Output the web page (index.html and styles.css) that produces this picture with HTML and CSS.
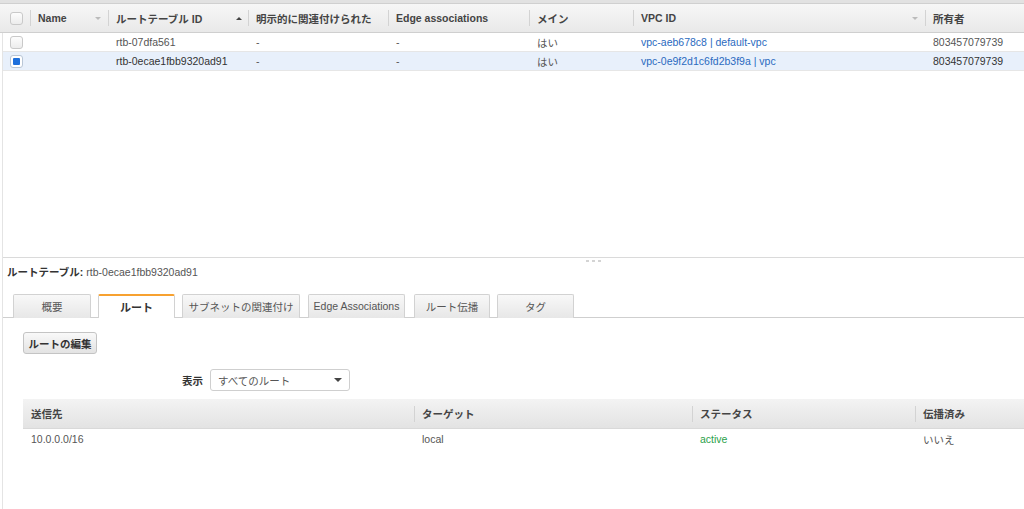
FILE: index.html
```html
<!DOCTYPE html>
<html lang="ja">
<head>
<meta charset="utf-8">
<title>ルートテーブル</title>
<link rel="stylesheet" href="styles.css">
</head>
<body>
<div class="topbar"></div>
<div class="grid head">
  <div class="cell chk"><span class="cb"></span></div>
  <div class="cell sep">Name<span class="arrow down light"></span></div>
  <div class="cell sep">ルートテーブル ID<span class="arrow up"></span></div>
  <div class="cell sep">明示的に関連付けられた</div>
  <div class="cell sep">Edge associations</div>
  <div class="cell sep">メイン</div>
  <div class="cell sep">VPC ID<span class="arrow down light"></span></div>
  <div class="cell sep">所有者</div>
</div>
<div class="main">
  <div class="list">
    <div class="grid row">
      <div class="cell chk"><span class="cb"></span></div>
      <div class="cell"></div>
      <div class="cell">rtb-07dfa561</div>
      <div class="cell">-</div>
      <div class="cell">-</div>
      <div class="cell">はい</div>
      <div class="cell link">vpc-aeb678c8 | default-vpc</div>
      <div class="cell">803457079739</div>
    </div>
    <div class="grid row selected">
      <div class="cell chk"><span class="cb on"></span></div>
      <div class="cell"></div>
      <div class="cell dark">rtb-0ecae1fbb9320ad91</div>
      <div class="cell">-</div>
      <div class="cell">-</div>
      <div class="cell">はい</div>
      <div class="cell link">vpc-0e9f2d1c6fd2b3f9a | vpc</div>
      <div class="cell dark">803457079739</div>
    </div>
  </div>
  <div class="details">
    <div class="gripline"><span class="grip"><i></i><i></i><i></i></span></div>
    <div class="title"><b>ルートテーブル:</b> rtb-0ecae1fbb9320ad91</div>
    <div class="tabs">
      <div class="tab w78">概要</div>
      <div class="tab w77 active">ルート</div>
      <div class="tab w118">サブネットの関連付け</div>
      <div class="tab w97">Edge Associations</div>
      <div class="tab w76">ルート伝播</div>
      <div class="tab w77">タグ</div>
    </div>
    <div class="pane">
      <div class="btnrow"><span class="btn">ルートの編集</span></div>
      <div class="filter">
        <b>表示</b>
        <div class="select"><span>すべてのルート</span><span class="caret"></span></div>
      </div>
      <div class="rtable">
        <div class="rgrid rhead">
          <div class="rc">送信先</div>
          <div class="rc sep">ターゲット</div>
          <div class="rc sep">ステータス</div>
          <div class="rc sep">伝播済み</div>
        </div>
        <div class="rgrid rrow">
          <div class="rc">10.0.0.0/16</div>
          <div class="rc">local</div>
          <div class="rc green">active</div>
          <div class="rc">いいえ</div>
        </div>
      </div>
    </div>
  </div>
</div>
</body>
</html>
```
FILE: styles.css
```css
html, body {
  margin: 0;
  padding: 0;
  background: #fff;
}
body {
  width: 1024px;
  height: 509px;
  overflow: hidden;
  font-family: "Liberation Sans", Arial, "Noto Sans CJK JP", sans-serif;
  font-size: 10.5px;
  color: #555;
}
.topbar {
  height: 3px;
  background: #e2e2e2;
  border-bottom: 1px solid #d0d0d0;
}
.grid {
  display: grid;
  grid-template-columns: 30px 78px 140px 140px 141px 104px 292px 99px;
}
.head {
  height: 28px;
  background: linear-gradient(#f7f7f7, #e9e9e9);
  border-bottom: 1px solid #cfcfcf;
  font-weight: bold;
  color: #444;
}
.cell {
  display: flex;
  align-items: center;
  padding-left: 8px;
  white-space: nowrap;
  overflow: hidden;
}
.sep {
  background-image: linear-gradient(#d3d3d3, #d3d3d3);
  background-repeat: no-repeat;
  background-position: left center;
  background-size: 1px 16px;
}
.head .cell.chk {
  padding-left: 10px;
}
.arrow {
  margin-left: auto;
  margin-right: 7px;
  width: 0;
  height: 0;
  border-left: 3px solid transparent;
  border-right: 3px solid transparent;
}
.arrow.down {
  border-top: 3px solid #bbb;
}
.arrow.up {
  border-bottom: 3px solid #444;
  margin-right: 6px;
}
.cb {
  display: block;
  box-sizing: border-box;
  width: 13px;
  height: 13px;
  border: 1px solid #c9c9c9;
  border-radius: 3px;
  background: linear-gradient(#fdfdfd, #ececec);
}
.cb.on {
  border-color: #b9c6d6;
  background: #fff;
  padding: 2px;
}
.cb.on::after {
  content: "";
  display: block;
  width: 7px;
  height: 7px;
  border-radius: 1px;
  background: #1d6fdc;
}
.main {
  margin-left: 2px;
  border-left: 1px solid #e4e4e4;
  height: 476px;
}
.list {
  height: 224px;
}
.main .grid {
  grid-template-columns: 27px 78px 140px 140px 141px 104px 292px 99px;
}
.row {
  height: 18px;
  border-bottom: 1px solid #e6e6e6;
}
.row .cell.chk {
  padding-left: 7px;
}
.row.selected {
  background: #e8f0fb;
}
.link {
  color: #2a6ac0;
}
.dark {
  color: #333;
}
.details {
  border-top: 1px solid #dadada;
}
.gripline {
  display: flex;
  justify-content: flex-start;
  padding-left: 583px;
  height: 5px;
  align-items: center;
}
.grip {
  display: flex;
  gap: 3px;
}
.grip i {
  display: block;
  width: 3px;
  height: 2px;
  background: #d4d4d4;
}
.title {
  height: 14px;
  line-height: 14px;
  padding-left: 4px;
  margin-top: 2px;
  margin-bottom: 15px;
  color: #555;
}
.title b {
  color: #333;
}
.tabs {
  display: flex;
  gap: 7px;
  padding-left: 10px;
  border-bottom: 1px solid #cfcfcf;
  height: 23px;
  align-items: flex-end;
}
.tab {
  box-sizing: border-box;
  display: flex;
  align-items: center;
  justify-content: center;
  border: 1px solid #d2d2d2;
  border-bottom: none;
  border-radius: 2px 2px 0 0;
  background: linear-gradient(#f8f8f8, #e7e7e7);
  color: #555;
  margin-bottom: -1px;
  height: 24px;
  padding-bottom: 1px;
}
.tab.active {
  background: #fff;
  border-top: 2px solid #f7a130;
  color: #333;
  font-weight: bold;
  font-size: 11px;
}
.w78 { width: 78px; }
.w77 { width: 77px; }
.w118 { width: 118px; }
.w97 { width: 97px; margin-left: 1px; }
.w76 { width: 76px; margin-left: 2px; }
.pane {
  padding-left: 20px;
}
.btnrow {
  margin-top: 14px;
  display: flex;
}
.btn {
  box-sizing: border-box;
  height: 22px;
  width: 74px;
  display: flex;
  align-items: center;
  justify-content: center;
  border: 1px solid #c4c4c4;
  border-radius: 3px;
  background: linear-gradient(#f9f9f9, #e3e3e3);
  font-weight: bold;
  color: #333;
}
.filter {
  margin-top: 15px;
  margin-left: 159px;
  display: flex;
  align-items: center;
  gap: 7px;
  height: 22px;
}
.filter b {
  color: #333;
}
.select {
  box-sizing: border-box;
  width: 140px;
  height: 22px;
  border: 1px solid #cfcfcf;
  border-radius: 3px;
  display: flex;
  align-items: center;
  padding-left: 7px;
  padding-right: 7px;
  color: #555;
}
.caret {
  margin-left: auto;
  width: 0;
  height: 0;
  border-left: 4px solid transparent;
  border-right: 4px solid transparent;
  border-top: 4px solid #444;
}
.rtable {
  margin-top: 8px;
}
.rgrid {
  display: grid;
  grid-template-columns: 391px 278px 223px 1fr;
}
.rhead {
  height: 29px;
  background: linear-gradient(#f3f3f3, #e3e3e3);
  border-bottom: 1px solid #d9d9d9;
  font-weight: bold;
  color: #444;
}
.rc {
  display: flex;
  align-items: center;
  padding-left: 8px;
  white-space: nowrap;
}
.rrow {
  height: 20px;
}
.green {
  color: #2aa14a;
}
```
